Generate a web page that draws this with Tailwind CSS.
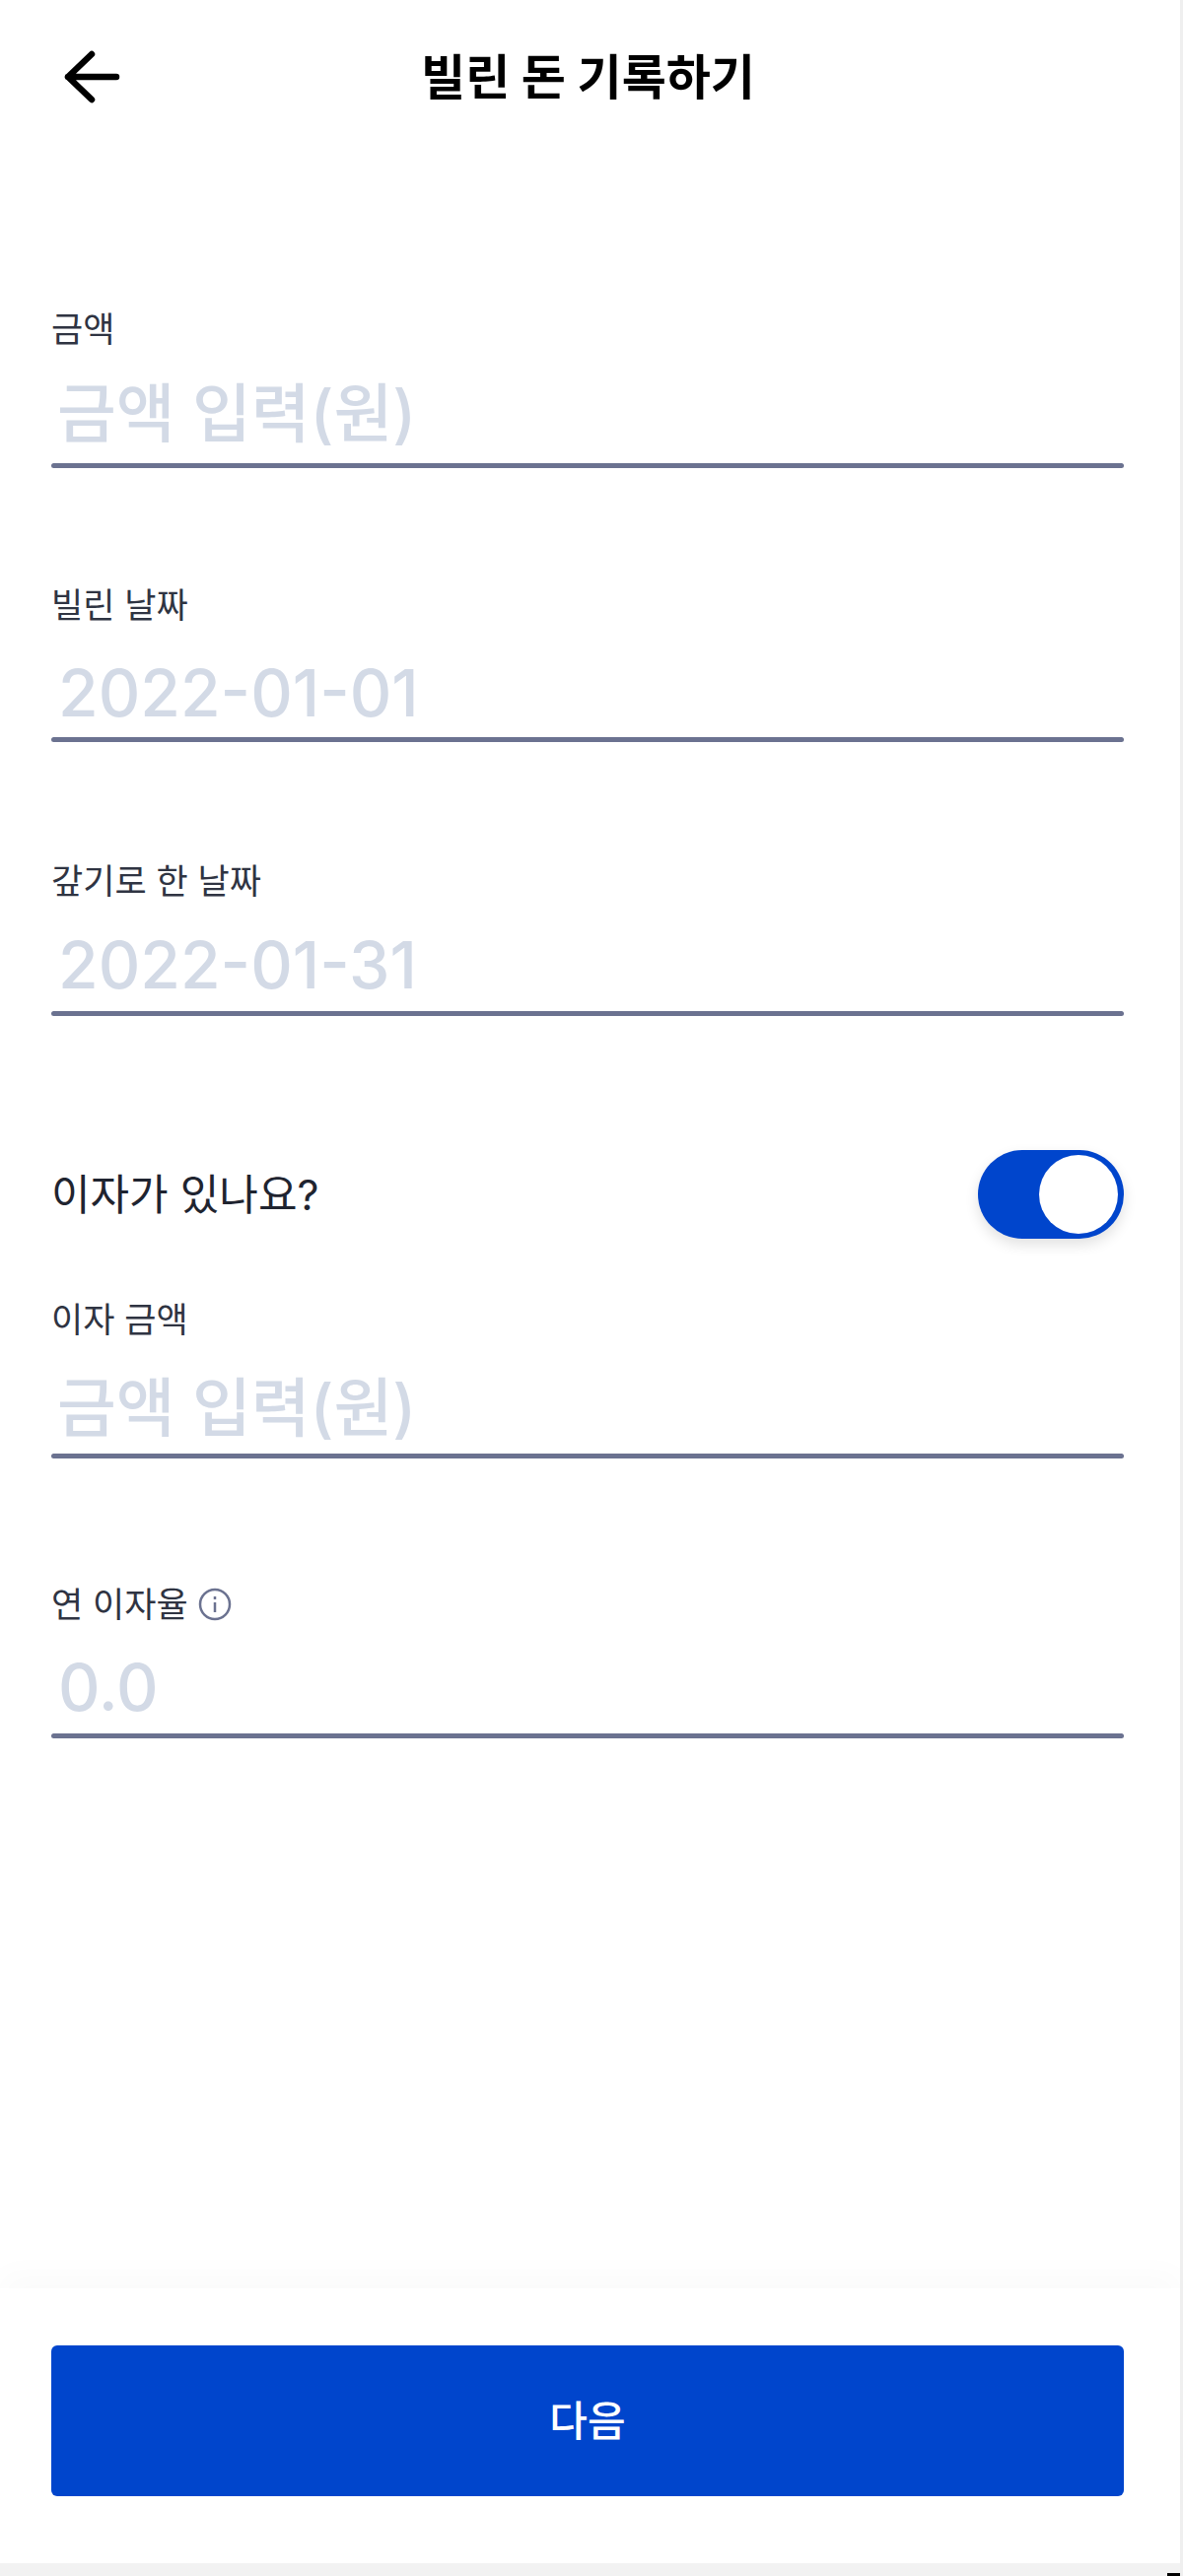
<!DOCTYPE html>
<html lang="ko">
<head>
    <meta charset="UTF-8">
    <meta name="viewport" content="width=device-width, initial-scale=1.0">
    <title>빌린 돈 기록하기</title>
    <script src="https://cdn.jsdelivr.net/npm/@tailwindcss/browser@4"></script>
</head>
<body class="bg-white font-['Inter','Noto_Sans_CJK_KR',sans-serif]">
    <div class="relative flex flex-col h-[2614px] w-[1200px] overflow-hidden border-r-[3px] border-[#efefef]">
        <!-- header -->
        <header class="relative flex items-center justify-center h-[156px] pt-[2px] pr-[4px] shrink-0">
            <button class="absolute left-[64px] top-[48px] w-[60px] h-[60px]">
                <svg viewBox="0 0 60 60" class="w-full h-full" fill="none" stroke="#000" stroke-width="6.5" stroke-linecap="round" stroke-linejoin="round">
                    <path d="M54 30H5M29 7L5 30l24 23"/>
                </svg>
            </button>
            <h1 class="text-[49px] font-bold text-black">빌린 돈 기록하기</h1>
        </header>

        <main class="flex flex-col flex-1 pl-[52px] pr-[57px] pt-[156px]">
            <div class="flex flex-col">
                <label class="text-[35px] leading-[44px] text-[#2f3442]">금액</label>
                <div class="h-[100px] flex items-center pl-[6px] text-[65px] font-medium text-[#d3dae6] mt-[14px]">금액 입력(원)</div>
                <div class="h-[5px] bg-[#6b7290] rounded-sm"></div>
            </div>
            <div class="flex flex-col mt-[117px]">
                <label class="text-[35px] leading-[44px] text-[#2f3442]">빌린 날짜</label>
                <div class="h-[90px] flex items-center pl-[7px] text-[66px] font-medium text-[#d3dae6] mt-[22px]">2022-01-01</div>
                <div class="h-[5px] bg-[#6b7290] rounded-sm"></div>
            </div>
            <div class="flex flex-col mt-[119px]">
                <label class="text-[35px] leading-[44px] text-[#2f3442]">갚기로 한 날짜</label>
                <div class="h-[94px] flex items-center pl-[7px] text-[66px] font-medium text-[#d3dae6] mt-[16px]">2022-01-31</div>
                <div class="h-[5px] bg-[#6b7290] rounded-sm"></div>
            </div>

            <div class="flex items-center justify-between h-[90px] mt-[136px]">
                <span class="text-[43px] text-[#1f2430]">이자가 있나요?</span>
                <div class="relative w-[148px] h-[90px] rounded-full bg-[#0045cc] shadow-[0_6px_14px_rgba(0,0,0,0.12)]">
                    <div class="absolute right-[6px] top-[5px] w-[80px] h-[80px] rounded-full bg-white"></div>
                </div>
            </div>

            <div class="flex flex-col mt-[60px]">
                <label class="text-[35px] leading-[44px] text-[#2f3442]">이자 금액</label>
                <div class="h-[92px] flex items-center pl-[6px] text-[65px] font-medium text-[#d3dae6] mt-[22px]">금액 입력(원)</div>
                <div class="h-[5px] bg-[#6b7290] rounded-sm"></div>
            </div>
            <div class="flex flex-col mt-[126px]">
                <label class="flex items-center gap-[10px] text-[35px] leading-[44px] text-[#2f3442]">
                    연 이자율
                    <svg viewBox="0 0 34 34" class="w-[34px] h-[34px]" fill="none" stroke="#6b7290" stroke-width="2.5">
                        <circle cx="17" cy="17" r="15"/>
                        <path d="M17 15v10M17 9v3"/>
                    </svg>
                </label>
                <div class="h-[94px] flex items-center pl-[7px] text-[66px] font-medium text-[#d3dae6] mt-[15px]">0.0</div>
                <div class="h-[5px] bg-[#6b7290] rounded-sm"></div>
            </div>
        </main>

        <!-- footer -->
        <footer class="shrink-0 h-[279px] pl-[52px] pr-[57px] pt-[58px] bg-white shadow-[0_-16px_30px_rgba(0,0,0,0.02)]">
            <button class="w-full h-[153px] rounded-[6px] bg-[#0045cc] text-white text-[42px] font-medium">다음</button>
        </footer>

        <div class="h-[13px] shrink-0 bg-[#f2f2f2]"></div>
        <div class="absolute right-0 bottom-0 w-[13px] h-[3px] bg-black"></div>
    </div>
</body>
</html>
